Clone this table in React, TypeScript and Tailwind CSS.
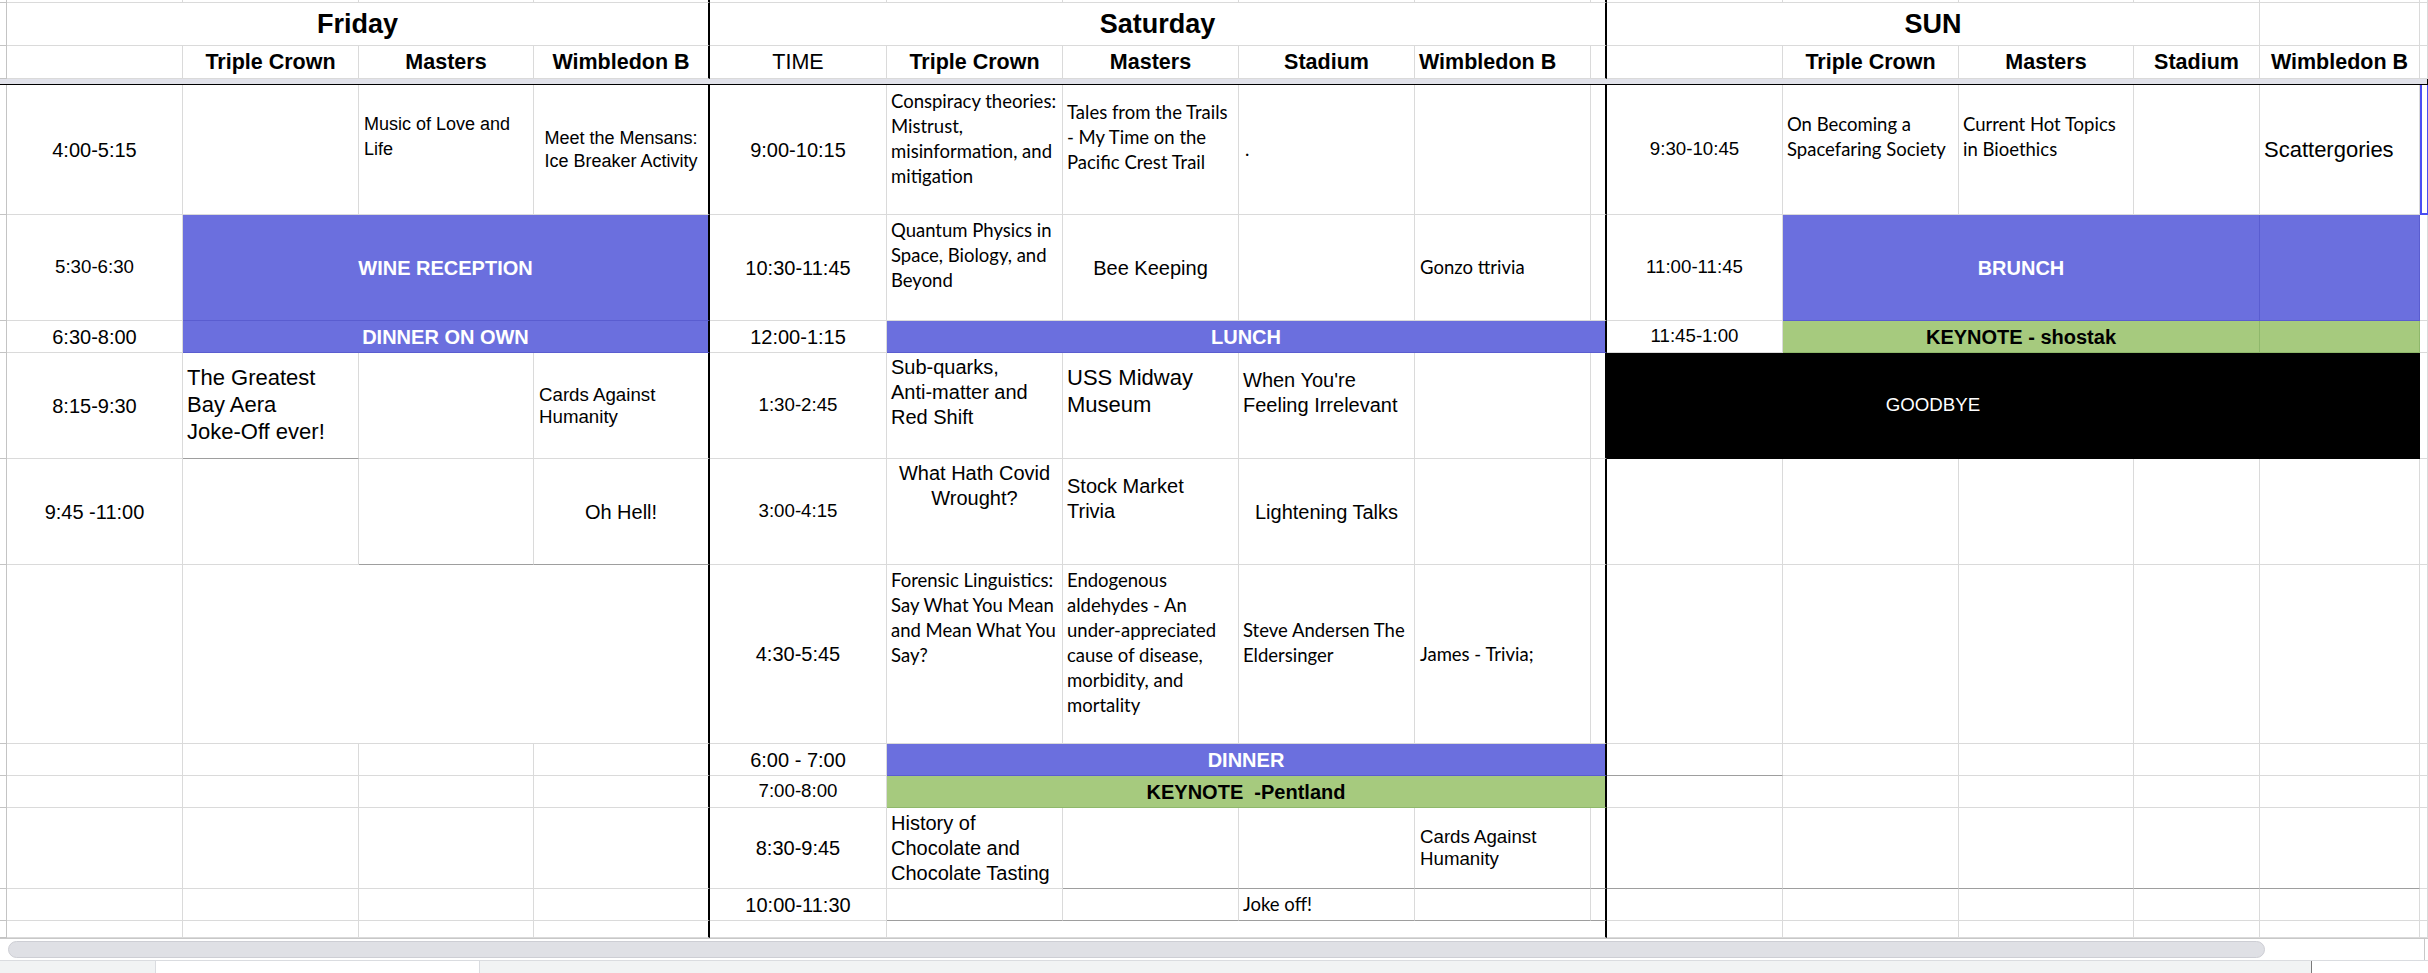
type Cell = { s?: number; t?: string; k?: string; b?: string; bb?: string };

const TT = "items-center justify-center font-bold text-[27px]";
const HD = "items-center justify-center font-bold text-[21.5px]";
const T20 = "items-center justify-center text-[20px]";
const T18 = "items-center justify-center text-[18.7px]";
const CAL = "font-['Lato',sans-serif] text-[18.5px] leading-[25px]";
const PUR = "items-center justify-center bg-[#6b6fde] text-white font-bold text-[20px]";
const PURB = "border-[#5a5dd0]";
const GRN = "items-center justify-center bg-[#a6ca7e] text-black font-bold text-[20px]";
const GRNB = "border-[#8fb86b]";
const BLK = "items-center justify-center bg-black text-white text-[18.7px]";
const DK = "border-b-[#9e9e9e]";

const L0: Cell = { b: "border-[#c4c4c4]" };
const E = (n: number, k?: string): Cell[] => Array.from({ length: n }, () => ({ k }));

const spans: Record<number, string> = {
  1: "",
  3: "col-span-3",
  4: "col-span-4",
  5: "col-span-5",
  6: "col-span-6",
  17: "col-span-17",
};

const rows: Cell[][] = [
  [L0, ...E(16)],
  [L0, { s: 4, t: "Friday", k: TT }, { s: 6, t: "Saturday", k: TT }, { s: 4, t: "SUN", k: TT }, {}, {}],
  [
    L0,
    {},
    { t: "Triple Crown", k: HD },
    { t: "Masters", k: HD },
    { t: "Wimbledon B", k: HD },
    { t: "TIME", k: "items-center justify-center text-[21.5px]" },
    { t: "Triple Crown", k: HD },
    { t: "Masters", k: HD },
    { t: "Stadium", k: HD },
    { t: "Wimbledon B", k: "items-center pl-[4px] font-bold text-[21.5px]" },
    {},
    {},
    { t: "Triple Crown", k: HD },
    { t: "Masters", k: HD },
    { t: "Stadium", k: HD },
    { t: "Wimbledon B", k: HD },
    {},
  ],
  [{ s: 17, k: "bg-[#e1e2ea]", b: "border-black" }],
  [
    L0,
    { t: "4:00-5:15", k: T20 },
    {},
    { t: "Music of Love and\nLife", k: "items-center pl-[5px] pb-[25px] text-[18px] leading-[25px]" },
    { t: "Meet the Mensans:\nIce Breaker Activity", k: "items-center justify-center text-[18px] leading-[23px]" },
    { t: "9:00-10:15", k: T20 },
    { t: "Conspiracy theories:\nMistrust,\nmisinformation, and\nmitigation", k: `items-center pl-[4px] pb-[21px] ${CAL}` },
    { t: "Tales from the Trails\n- My Time on the\nPacific Crest Trail", k: `items-center pl-[4px] pb-[24px] ${CAL}` },
    { t: ".", k: `items-center pl-[6px] ${CAL}` },
    {},
    {},
    { t: "9:30-10:45", k: T18 },
    { t: "On Becoming a\nSpacefaring Society", k: `items-center pl-[4px] pb-[25px] ${CAL}` },
    { t: "Current Hot Topics\nin Bioethics", k: `items-center pl-[4px] pb-[25px] ${CAL}` },
    {},
    { t: "Scattergories", k: "items-center pl-[4px] text-[22px]" },
    { b: "border-[#4a4ef2]", k: "border-l-2", bb: "border-b-2" },
  ],
  [
    L0,
    { t: "5:30-6:30", k: T18 },
    { s: 3, t: "WINE RECEPTION", k: PUR, b: PURB },
    { t: "10:30-11:45", k: T20 },
    { t: "Quantum Physics in\nSpace, Biology, and\nBeyond", k: `items-center pl-[4px] pb-[25px] ${CAL}` },
    { t: "Bee Keeping", k: T20 },
    {},
    { t: "Gonzo ttrivia", k: `items-center pl-[5px] ${CAL}` },
    {},
    { t: "11:00-11:45", k: T18 },
    { s: 3, t: "BRUNCH", k: PUR, b: PURB },
    { k: PUR, b: PURB },
    {},
  ],
  [
    L0,
    { t: "6:30-8:00", k: T20 },
    { s: 3, t: "DINNER ON OWN", k: PUR, b: PURB },
    { t: "12:00-1:15", k: T20 },
    { s: 5, t: "LUNCH", k: PUR, b: PURB },
    { t: "11:45-1:00", k: T18 },
    { s: 3, t: "KEYNOTE - shostak", k: GRN, b: GRNB },
    { k: GRN, b: GRNB },
    {},
  ],
  [
    L0,
    { t: "8:15-9:30", k: T20 },
    { t: "The Greatest\nBay Aera\nJoke-Off ever!", k: `items-center pl-[4px] text-[22px] leading-[26.7px] ${DK}` },
    {},
    { t: "Cards Against\nHumanity", k: "items-center pl-[5px] text-[18.7px] leading-[21.7px]" },
    { t: "1:30-2:45", k: T18 },
    { t: "Sub-quarks,\nAnti-matter and\nRed Shift", k: "items-center pl-[4px] pb-[27px] text-[20px] leading-[25px]" },
    { t: "USS Midway\nMuseum", k: "items-center pl-[4px] pb-[27px] text-[22px] leading-[26.7px]" },
    { t: "When You're\nFeeling Irrelevant", k: "items-center pl-[4px] pb-[26px] text-[20px] leading-[25px]" },
    {},
    {},
    { s: 4, t: "GOODBYE", k: BLK, b: "border-black" },
    { k: "bg-black", b: "border-black" },
    {},
  ],
  [
    L0,
    { t: "9:45 -11:00", k: T20 },
    {},
    { k: DK },
    { t: "Oh Hell!", k: `${T20} ${DK}` },
    { t: "3:00-4:15", k: T18 },
    { t: "What Hath Covid\nWrought?", k: "items-start justify-center text-center pt-[2px] text-[20px] leading-[25px]" },
    { t: "Stock Market\nTrivia", k: "items-center pl-[4px] pb-[26px] text-[20px] leading-[25px]" },
    { t: "Lightening Talks", k: T20 },
    {},
    {},
    ...E(5),
    {},
  ],
  [
    L0,
    {},
    { s: 3 },
    { t: "4:30-5:45", k: T20 },
    { t: "Forensic Linguistics:\nSay What You Mean\nand Mean What You\nSay?", k: `items-start pl-[4px] pt-[3px] ${CAL}` },
    { t: "Endogenous\naldehydes - An\nunder-appreciated\ncause of disease,\nmorbidity, and\nmortality", k: `items-start pl-[4px] pt-[3px] ${CAL}` },
    { t: "Steve Andersen The\nEldersinger", k: `items-center pl-[4px] pb-[23px] ${CAL}` },
    { t: "James - Trivia;", k: `items-center pl-[5px] ${CAL}` },
    {},
    ...E(5),
    {},
  ],
  [L0, ...E(4), { t: "6:00 - 7:00", k: T20 }, { s: 5, t: "DINNER", k: PUR, b: PURB }, { k: DK }, ...E(4), {}],
  [L0, ...E(4), { t: "7:00-8:00", k: T18 }, { s: 5, t: "KEYNOTE  -Pentland", k: GRN, b: GRNB }, ...E(5), {}],
  [
    L0,
    ...E(4),
    { t: "8:30-9:45", k: T20 },
    { t: "History of\nChocolate and\nChocolate Tasting", k: "items-center pl-[4px] text-[20px] leading-[25px]" },
    { k: DK },
    { k: DK },
    { t: "Cards Against\nHumanity", k: `items-center pl-[5px] text-[18.7px] leading-[21.7px] ${DK}` },
    { k: DK },
    ...E(5, DK),
    {},
  ],
  [
    L0,
    ...E(4),
    { t: "10:00-11:30", k: T20 },
    { k: DK },
    { k: DK },
    { t: "Joke off!", k: `items-center pl-[4px] ${CAL} ${DK}` },
    { k: DK },
    { k: DK },
    ...E(5),
    {},
  ],
  [L0, ...E(4), {}, { s: 5 }, ...E(5), {}],
];

function Sheet() {
  return (
    <div className="grid grid-cols-[7px_176px_176px_175px_176px_177px_176px_176px_176px_176px_16px_176px_176px_175px_126px_160px_8px] grid-rows-[3px_43px_33px_6px_130px_106px_32px_106px_106px_179px_32px_32px_81px_32px_17px]">
      {rows.flatMap((r, ri) => {
        let col = 0;
        return r.map((c, ci) => {
          const s = c.s ?? 1;
          const end = col + s - 1;
          col += s;
          const right = end === 4 || end === 10 ? "border-r-2 border-r-black" : "border-r";
          return (
            <div
              key={`${ri}-${ci}`}
              className={`flex min-w-0 overflow-hidden whitespace-pre text-black ${spans[s]} ${right} ${c.bb ?? "border-b"} ${c.b ?? "border-[#dadada]"} ${c.k ?? ""}`}
            >
              {c.t}
            </div>
          );
        });
      })}
    </div>
  );
}

export default function App() {
  return (
    <div className="w-[2428px] h-[973px] overflow-hidden bg-white font-['Liberation_Sans',Arial,sans-serif] text-black">
      <Sheet />
      <div className="h-[22px] flex items-center pl-[8px] bg-white border-t border-[#c8c8c8]">
        <div className="w-[2257px] h-[17px] rounded-full bg-[#dfe0e5] border border-[#cdced4]" />
        <div className="flex-1" />
        <div className="w-px h-full bg-[#c8c8c8] mr-[3px]" />
      </div>
      <div className="h-[13px] flex bg-[#f1f3f4] border-t border-[#dadce0]">
        <div className="w-[155px]" />
        <div className="w-[325px] bg-white border-x border-[#dadce0]" />
        <div className="flex-1" />
        <div className="w-[117px] bg-white border-l border-[#7a7a7a]" />
      </div>
    </div>
  );
}
